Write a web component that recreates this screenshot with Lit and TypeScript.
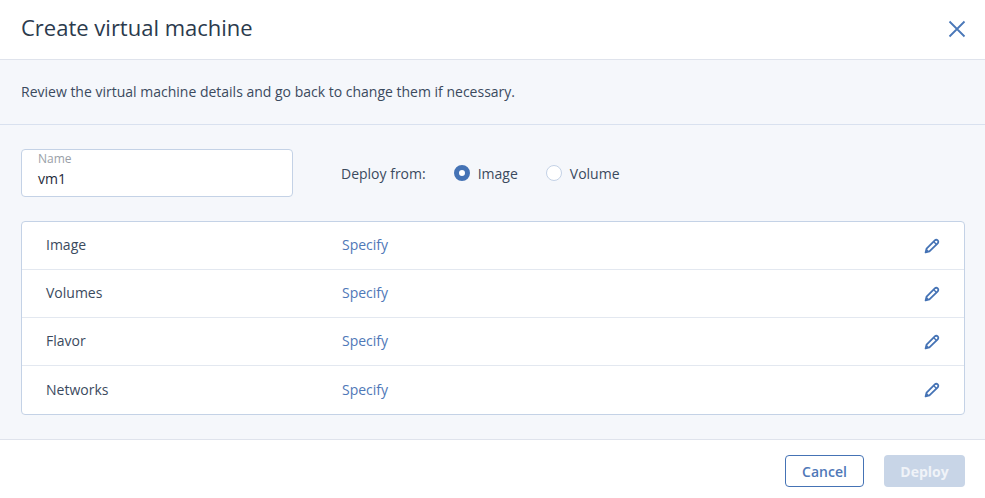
import { LitElement, html, css } from "lit";
import { customElement } from "lit/decorators.js";

const rows = ["Image", "Volumes", "Flavor", "Networks"];

@customElement("app-root")
export class AppRoot extends LitElement {
  static styles = css`
    :host {
      display: flex;
      flex-direction: column;
      width: 985px;
      height: 498px;
      font-family: "Open Sans", sans-serif;
      font-size: 14px;
      color: #3b4a5e;
      background: #fff;
      overflow: hidden;
    }
    .head {
      height: 59px;
      flex: none;
      border-bottom: 1px solid #dfe3ec;
      display: flex;
      align-items: center;
      justify-content: space-between;
      padding: 0 19px 0 21px;
    }
    .title {
      font-size: 22px;
      color: #2b3a4d;
      margin-bottom: 5px;
    }
    .close {
      width: 18px;
      height: 18px;
      display: block;
      margin-bottom: 2px;
    }
    .sub {
      height: 62px;
      flex: none;
      border-bottom: 1px solid #d9e1ef;
      background: #f5f7fb;
      display: flex;
      align-items: center;
      padding: 0 21px 2px;
    }
    .main {
      flex: 1;
      background: #f5f7fb;
      padding: 24px 20px 24px 21px;
      display: flex;
      flex-direction: column;
      gap: 24px;
    }
    .top {
      display: flex;
      align-items: center;
    }
    .field {
      width: 272px;
      height: 48px;
      box-sizing: border-box;
      border: 1px solid #c4d2e6;
      border-radius: 4px;
      background: #fff;
      padding: 1px 16px;
      margin-right: 48px;
      display: flex;
      flex-direction: column;
    }
    .field label {
      font-size: 12px;
      line-height: 15px;
      color: #9a9fa8;
    }
    .field .val {
      font-size: 14px;
      line-height: 24px;
      margin-top: 1px;
      color: #1e2a3a;
    }
    .deploy {
      display: flex;
      align-items: center;
    }
    .radio {
      display: flex;
      align-items: center;
      gap: 8px;
    }
    .deploy .lbl {
      margin-right: 28px;
    }
    .radio + .radio {
      margin-left: 28px;
    }
    .dot {
      width: 16px;
      height: 16px;
      box-sizing: border-box;
      border-radius: 50%;
      border: 1px solid #c4d2e6;
      background: #fff;
    }
    .dot.on {
      border: 5px solid #4573b5;
    }
    .table {
      border: 1px solid #c4d2e6;
      border-radius: 4px;
      background: #fff;
    }
    .row {
      height: 47px;
      display: grid;
      grid-template-columns: 296px 1fr 16px;
      align-items: center;
      padding: 0 24px;
      border-bottom: 1px solid #e3e8f0;
    }
    .row:last-child {
      border-bottom: none;
      height: 48px;
    }
    .row span {
      margin-bottom: 2px;
    }
    .link {
      color: #4f78b8;
    }
    .pen {
      width: 16px;
      height: 16px;
      display: block;
    }
    .foot {
      height: 59px;
      flex: none;
      border-top: 1px solid #dfe3ec;
      box-sizing: border-box;
      display: flex;
      align-items: flex-start;
      justify-content: flex-end;
      gap: 20px;
      padding: 15px 20px 0 0;
    }
    .btn {
      height: 32px;
      box-sizing: border-box;
      border-radius: 4px;
      display: flex;
      align-items: center;
      justify-content: center;
      font-weight: 600;
      font-size: 14px;
    }
    .cancel {
      width: 79px;
      border: 1px solid #4573b5;
      color: #4f78b8;
      background: #fff;
    }
    .ok {
      width: 81px;
      background: #c8d5e7;
      color: #f0f3f8;
      font-weight: 700;
    }
  `;

  render() {
    return html`
      <div class="head">
        <div class="title">Create virtual machine</div>
        <svg class="close" viewBox="0 0 18 18" fill="none" stroke="#4a78b8" stroke-width="1.8">
          <path d="M1.5 1.5 16.5 16.5M16.5 1.5 1.5 16.5" />
        </svg>
      </div>
      <div class="sub">Review the virtual machine details and go back to change them if necessary.</div>
      <div class="main">
        <div class="top">
          <div class="field">
            <label>Name</label>
            <div class="val">vm1</div>
          </div>
          <div class="deploy">
            <span class="lbl">Deploy from:</span>
            <div class="radio"><span class="dot on"></span>Image</div>
            <div class="radio"><span class="dot"></span>Volume</div>
          </div>
        </div>
        <div class="table">
          ${rows.map(
            (r) => html`<div class="row">
              <span>${r}</span>
              <span class="link">Specify</span>
              <svg class="pen" viewBox="0 0 16 16" fill="none" stroke="#4573b5" stroke-width="1.8" stroke-linejoin="round">
                <path d="M1.6 14.4 2.6 10.6 10.8 2.4a2 2 0 0 1 2.9 2.9L5.4 13.4Z" />
                <path d="M9.6 3.6 12.5 6.5" stroke-width="1.4" />
                <path d="M1.4 14.6 2.5 10.8 5.2 13.5Z" fill="#4573b5" stroke="none" />
              </svg>
            </div>`
          )}
        </div>
      </div>
      <div class="foot">
        <div class="btn cancel">Cancel</div>
        <div class="btn ok">Deploy</div>
      </div>
    `;
  }
}
